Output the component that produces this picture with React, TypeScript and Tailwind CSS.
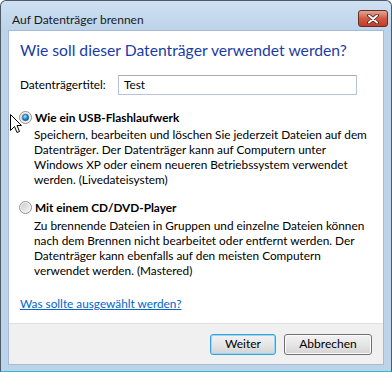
import React from 'react';

const font = { fontFamily: 'Lato, "Liberation Sans", Arial, sans-serif' };

function Radio({ checked }: { checked?: boolean }) {
  return (
    <svg width="13" height="13" viewBox="0 0 13 13" className="shrink-0">
      <defs>
        <linearGradient id={checked ? 'rg1' : 'rg0'} x1="0" y1="0" x2="1" y2="1">
          <stop offset="0" stopColor="#cbcbcb" />
          <stop offset="1" stopColor="#f6f6f6" />
        </linearGradient>
        <radialGradient id="dot" cx="0.4" cy="0.35" r="0.7">
          <stop offset="0" stopColor="#b8ecff" />
          <stop offset="0.45" stopColor="#2aa2dd" />
          <stop offset="1" stopColor="#0b4f8a" />
        </radialGradient>
      </defs>
      <circle cx="6.5" cy="6.5" r="6" fill="#f4f4f4" stroke="#8e8f8f" />
      <circle cx="6.5" cy="6.5" r="4.5" fill={`url(#${checked ? 'rg1' : 'rg0'})`} />
      {checked && <circle cx="6.5" cy="6.5" r="3.2" fill="url(#dot)" stroke="#1c5180" strokeWidth="0.6" />}
    </svg>
  );
}

function Cursor() {
  return (
    <svg width="12" height="20" viewBox="0 0 12 20" className="absolute left-[10px] top-[114px]">
      <path d="M0.5 0.5 L0.5 16.5 L4.5 12.5 L7 18.5 L9.5 17.5 L7 11.5 L11.5 11.5 Z" fill="#fff" stroke="#000" strokeWidth="1" />
    </svg>
  );
}

export default function App() {
  return (
    <div className="relative w-[392px] h-[372px] overflow-hidden bg-white" style={font}>
      <div className="w-full h-full flex flex-col rounded-t-[6px] border border-[#4d5a67] border-b-[#2fb9c9] bg-[#bcd3ea] px-[7px] pb-[6px]">
        {/* Title bar */}
        <div className="h-[29px] flex items-start justify-between bg-gradient-to-b from-[#cfe0f2] to-[#bcd3ea] -mx-[7px] px-[11px] rounded-t-[6px]">
          <span className="mt-[11px] text-[12px] leading-[16px] text-[#1a1a1a]">Auf Datenträger brennen</span>
          <div className="mt-[9px] -mr-[8px] w-[30px] h-[17px] rounded-[3px] border border-[#6b2a20] bg-gradient-to-b from-[#e3a597] via-[#cf5a45] to-[#c13d26] flex items-center justify-center">
            <svg width="12" height="10" viewBox="0 0 12 10">
              <path d="M2 1.5 L10 8.5 M10 1.5 L2 8.5" stroke="#4a1a12" strokeWidth="3.6" strokeLinecap="round" />
              <path d="M2 1.5 L10 8.5 M10 1.5 L2 8.5" stroke="#fff" strokeWidth="2" strokeLinecap="round" />
            </svg>
          </div>
        </div>

        {/* Client area */}
        <div className="flex-1 flex flex-col bg-white border border-[#a4bbd3] text-[11.8px] text-black">
          <div className="flex-1 flex flex-col pl-[10px]">
            <div className="mt-[8px] text-[15.7px] leading-[22px] text-[#1a3ba6] pl-[1px]">
              Wie soll dieser Datenträger verwendet werden?
            </div>

            <div className="mt-[14px] flex items-center">
              <span className="w-[99px] pl-[1px]">Datenträgertitel:</span>
              <div className="w-[239px] h-[20px] border border-[#b5c4d6] border-t-[#abadb3] flex items-center px-[5px]">
                Test
              </div>
            </div>

            <div className="mt-[15px] flex items-center gap-[3px] h-[15px]">
              <Radio checked />
              <span className="font-bold leading-[15px]">Wie ein USB-Flashlaufwerk</span>
            </div>
            <div className="pl-[15px] mt-[2px] leading-[15px] whitespace-nowrap">
              Speichern, bearbeiten und löschen Sie jederzeit Dateien auf dem<br />
              Datenträger. Der Datenträger kann auf Computern unter<br />
              Windows XP oder einem neueren Betriebssystem verwendet<br />
              werden. (Livedateisystem)
            </div>

            <div className="mt-[13px] flex items-center gap-[3px] h-[15px]">
              <Radio />
              <span className="font-bold leading-[15px]">Mit einem CD/DVD-Player</span>
            </div>
            <div className="pl-[15px] mt-[3px] leading-[15px] whitespace-nowrap">
              Zu brennende Dateien in Gruppen und einzelne Dateien können<br />
              nach dem Brennen nicht bearbeitet oder entfernt werden. Der<br />
              Datenträger kann ebenfalls auf den meisten Computern<br />
              verwendet werden. (Mastered)
            </div>

            <div className="mt-[18px] pl-[1px] leading-[15px]">
              <a className="text-[#0066cc] underline">Was sollte ausgewählt werden?</a>
            </div>
          </div>

          {/* Footer */}
          <div className="h-[41px] bg-[#f0f0f0] border-t border-[#dfdfdf] flex items-center justify-end gap-[8px] pr-[11px]">
            <button className="w-[66px] h-[21px] rounded-[3px] border border-[#3c9fd6] shadow-[inset_0_0_0_1px_#8fdcf7] bg-gradient-to-b from-[#f2f2f2] via-[#e6e6e6] to-[#d3d3d3] text-[12px] text-black">
              Weiter
            </button>
            <button className="w-[88px] h-[21px] rounded-[3px] border border-[#707070] shadow-[inset_0_0_0_1px_#fcfcfc] bg-gradient-to-b from-[#f2f2f2] via-[#e6e6e6] to-[#d3d3d3] text-[12px] text-black">
              Abbrechen
            </button>
          </div>
        </div>
      </div>
      <Cursor />
    </div>
  );
}
